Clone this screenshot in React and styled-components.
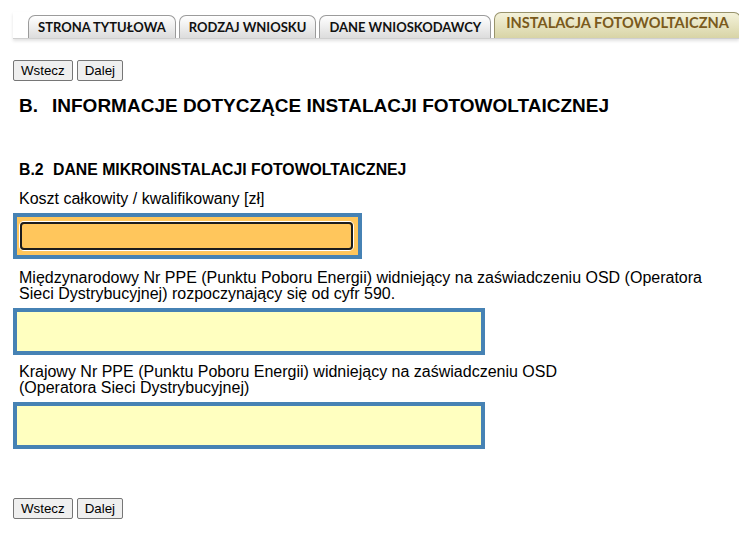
import React from 'react'
import styled, { createGlobalStyle } from 'styled-components'

const GlobalStyle = createGlobalStyle`
  body {
    margin: 0;
    background: #fff;
    color: #000;
    font-family: "Liberation Sans", Arial, sans-serif;
  }
`

const Page = styled.div`
  display: flex;
  flex-direction: column;
  align-items: flex-start;
  padding: 12px 0 0 13px;
`

const TabStrip = styled.div`
  align-self: stretch;
  display: flex;
  align-items: flex-end;
  gap: 3px;
  height: 26px;
  padding-left: 15px;
  border-bottom: 1px solid #cfcfcf;
  box-shadow: 0 2px 3px rgba(0, 0, 0, 0.12);
`

const Tab = styled.div`
  box-sizing: border-box;
  height: ${p => (p.$active ? 26 : 23)}px;
  padding: ${p => (p.$active ? '0 11px' : '2px 9px 0')};
  display: flex;
  align-items: flex-start;
  border: 1px solid ${p => (p.$active ? '#98936c' : '#9b9b9b')};
  border-bottom: none;
  border-radius: 7px 7px 0 0;
  background: ${p =>
    p.$active
      ? 'linear-gradient(#f4f2da, #d8d4a6)'
      : 'linear-gradient(#ffffff, #dcdcdc)'};
  color: ${p => (p.$active ? '#7a5a1c' : '#111')};
  font-family: Lato, "Open Sans", sans-serif;
  font-weight: 700;
  font-size: ${p => (p.$active ? 14.6 : 13)}px;
  line-height: 19px;
  white-space: nowrap;
  cursor: pointer;
`

const ButtonRow = styled.div`
  display: flex;
  gap: 4px;
  margin-top: ${p => p.$top}px;
`

const NavButton = styled.button`
  box-sizing: border-box;
  height: 21px;
  padding: 2px 7px;
  border: 1px solid #767676;
  border-radius: 2px;
  background: #efefef;
  color: #000;
  font-family: "Liberation Sans", Arial, sans-serif;
  font-size: 13.33px;
  line-height: 15px;
  cursor: pointer;
`

const SectionTitle = styled.h1`
  margin: 14px 0 0 6px;
  font-size: 19px;
  line-height: 22px;
  font-weight: 700;
`

const SubTitle = styled.h2`
  margin: 44px 0 0 6px;
  font-size: 15.8px;
  line-height: 18px;
  font-weight: 700;
`

const Marker = styled.span`
  display: inline-block;
  width: ${p => p.$w}px;
`

const FieldLabel = styled.label`
  display: block;
  margin: ${p => p.$top}px 0 0 6px;
  font-size: 16px;
  line-height: ${p => (p.$tight ? 16 : 18)}px;
`

const FocusFrame = styled.div`
  box-sizing: border-box;
  display: flex;
  width: 349px;
  height: 46px;
  margin-top: 5px;
  padding: 5px 5px 5px 3px;
  border: 4px solid #4682b4;
  background: #ffc65c;
`

const FocusInput = styled.input`
  flex: 1;
  box-sizing: border-box;
  margin: 0;
  padding: 0 4px;
  border: 2px solid #1c1c1c;
  border-radius: 4px;
  box-shadow: 0 0 0 1px #fff;
  background: transparent;
  font: 16px "Liberation Sans", Arial, sans-serif;
  outline: none;
`

const TextField = styled.input`
  box-sizing: border-box;
  width: 472px;
  height: 47px;
  margin: 6px 0 0;
  padding: 0 6px;
  border: 4px solid #4682b4;
  background: #ffffc0;
  font: 16px "Liberation Sans", Arial, sans-serif;
  outline: none;
`

const tabs = ['STRONA TYTUŁOWA', 'RODZAJ WNIOSKU', 'DANE WNIOSKODAWCY', 'INSTALACJA FOTOWOLTAICZNA']

function Nav({ top }) {
  return (
    <ButtonRow $top={top}>
      <NavButton type="button">Wstecz</NavButton>
      <NavButton type="button">Dalej</NavButton>
    </ButtonRow>
  )
}

export default function App() {
  return (
    <>
      <GlobalStyle />
      <Page>
        <TabStrip>
          {tabs.map((t, i) => (
            <Tab key={t} $active={i === tabs.length - 1}>
              {t}
            </Tab>
          ))}
        </TabStrip>

        <Nav top={21} />

        <SectionTitle>
          <Marker $w={33}>B.</Marker>INFORMACJE DOTYCZĄCE INSTALACJI FOTOWOLTAICZNEJ
        </SectionTitle>

        <SubTitle>
          <Marker $w={34}>B.2</Marker>DANE MIKROINSTALACJI FOTOWOLTAICZNEJ
        </SubTitle>

        <FieldLabel $top={11}>Koszt całkowity / kwalifikowany [zł]</FieldLabel>
        <FocusFrame>
          <FocusInput type="text" />
        </FocusFrame>

        <FieldLabel $top={11} $tight>
          Międzynarodowy Nr PPE (Punktu Poboru Energii) widniejący na zaświadczeniu OSD (Operatora
          <br />
          Sieci Dystrybucyjnej) rozpoczynający się od cyfr 590.
        </FieldLabel>
        <TextField type="text" />

        <FieldLabel $top={9} $tight>
          Krajowy Nr PPE (Punktu Poboru Energii) widniejący na zaświadczeniu OSD
          <br />
          (Operatora Sieci Dystrybucyjnej)
        </FieldLabel>
        <TextField type="text" />

        <Nav top={49} />
      </Page>
    </>
  )
}
